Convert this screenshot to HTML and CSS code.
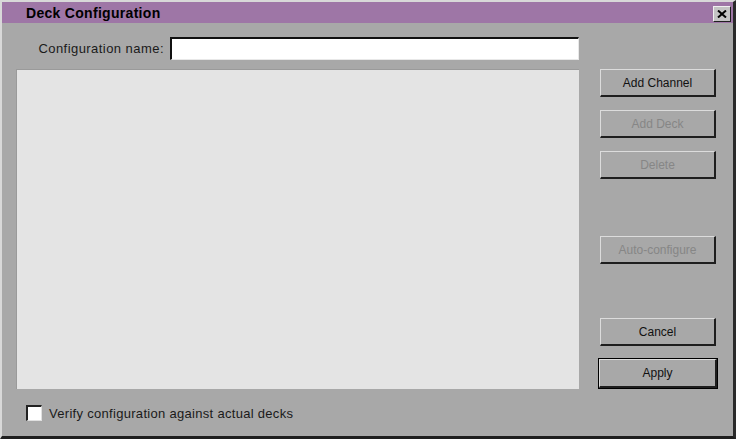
FILE: index.html
```html
<!DOCTYPE html>
<html lang="en">
<head>
  <meta charset="UTF-8">
  <title>Deck Configuration</title>
  <link rel="stylesheet" href="styles.css">
</head>
<body>
  <div class="dialog">
    <div class="titlebar">
      <span class="title">Deck Configuration</span>
      <button class="close-btn" type="button" aria-label="Close">
        <svg width="10" height="8" viewBox="0 0 10 8">
          <path d="M1 0.5 L9 7.5 M9 0.5 L1 7.5" stroke="#000" stroke-width="2"/>
        </svg>
      </button>
    </div>

    <div class="dialog-body">
      <div class="main-col">
        <div class="name-row">
          <label class="name-label" for="cfg-name">Configuration name:</label>
          <input class="name-input" id="cfg-name" type="text">
        </div>
        <div class="deck-panel"></div>
        <label class="verify-row">
          <span class="checkbox"></span>
          <span>Verify configuration against actual decks</span>
        </label>
      </div>

      <div class="button-col">
        <button class="btn" type="button">Add Channel</button>
        <button class="btn btn-gap-sm" type="button" disabled>Add Deck</button>
        <button class="btn btn-gap-sm" type="button" disabled>Delete</button>
        <button class="btn btn-gap-lg" type="button" disabled>Auto-configure</button>
        <button class="btn btn-gap-md" type="button">Cancel</button>
        <button class="btn btn-default" type="button">Apply</button>
      </div>
    </div>
  </div>
</body>
</html>
```

FILE: styles.css
```css
body, html {
  margin: 0;
  padding: 0;
  width: 100%;
  height: 100%;
  overflow: hidden;
  font-family: 'Liberation Sans', Arial, sans-serif;
  font-size: 12px;
  background: #a8a8a8;
}

.dialog {
  box-sizing: border-box;
  width: 736px;
  height: 439px;
  background: #a8a8a8;
  border-top: 2px solid #d8d8d8;
  border-left: 2px solid #d8d8d8;
  border-right: 3px solid #2a2a2a;
  border-bottom: 3px solid #1e1e1e;
  display: flex;
  flex-direction: column;
}

.titlebar {
  height: 21px;
  background: #9e76a6;
  display: flex;
  align-items: center;
  justify-content: space-between;
  padding: 0 2px 0 24px;
}

.title {
  font-weight: 700;
  font-size: 14px;
  letter-spacing: 0.3px;
  color: #000;
  padding-top: 1px;
}

.close-btn {
  box-sizing: border-box;
  width: 18px;
  height: 16px;
  margin-top: 3px;
  padding: 0;
  background: #c4c4c4;
  border-top: 1px solid #f0f0f0;
  border-left: 1px solid #f0f0f0;
  border-right: 1px solid #202020;
  border-bottom: 1px solid #202020;
  display: flex;
  align-items: center;
  justify-content: center;
}

.dialog-body {
  flex: 1;
  display: flex;
  padding-left: 14px;
}

.main-col {
  width: 563px;
  display: flex;
  flex-direction: column;
}

.name-row {
  display: flex;
  align-items: center;
  justify-content: flex-end;
  gap: 6px;
  margin-top: 14px;
}

.name-label {
  color: #1a1a1a;
  font-size: 13px;
  letter-spacing: 0.45px;
}

.name-input {
  box-sizing: border-box;
  width: 409px;
  height: 23px;
  margin: 0;
  background: #fff;
  border-top: 2px solid #111;
  border-left: 2px solid #111;
  border-right: 1px solid #e8e8e8;
  border-bottom: 1px solid #e8e8e8;
  outline: none;
}

.deck-panel {
  height: 320px;
  margin-top: 9px;
  background: #e4e4e4;
  border-left: 1px solid #9a9a9a;
  border-top: 1px solid #9a9a9a;
  box-sizing: border-box;
}

.verify-row {
  display: flex;
  align-items: center;
  gap: 7px;
  margin: 16px 0 0 10px;
  font-size: 13px;
  letter-spacing: 0.3px;
  color: #1a1a1a;
}

.checkbox {
  box-sizing: border-box;
  width: 16px;
  height: 16px;
  background: #fff;
  border-top: 2px solid #222;
  border-left: 2px solid #222;
  border-right: 1px solid #e0e0e0;
  border-bottom: 1px solid #e0e0e0;
}

.button-col {
  display: flex;
  flex-direction: column;
  margin-left: 21px;
  padding-top: 46px;
}

.btn {
  box-sizing: border-box;
  width: 116px;
  height: 28px;
  margin: 0;
  padding: 0;
  font-family: inherit;
  font-size: 12px;
  color: #111;
  background: #a8a8a8;
  border-top: 1px solid #dcdcdc;
  border-left: 1px solid #dcdcdc;
  border-right: 2px solid #1e1e1e;
  border-bottom: 2px solid #1e1e1e;
}

.btn:disabled {
  color: #868686;
}

.btn-gap-sm {
  margin-top: 13px;
}

.btn-gap-lg {
  margin-top: 57px;
}

.btn-gap-md {
  margin-top: 54px;
}

.btn-default {
  width: 118px;
  height: 29px;
  margin-top: 13px;
  margin-left: -1px;
  outline: 1px solid #000;
  outline-offset: 0;
}
```
